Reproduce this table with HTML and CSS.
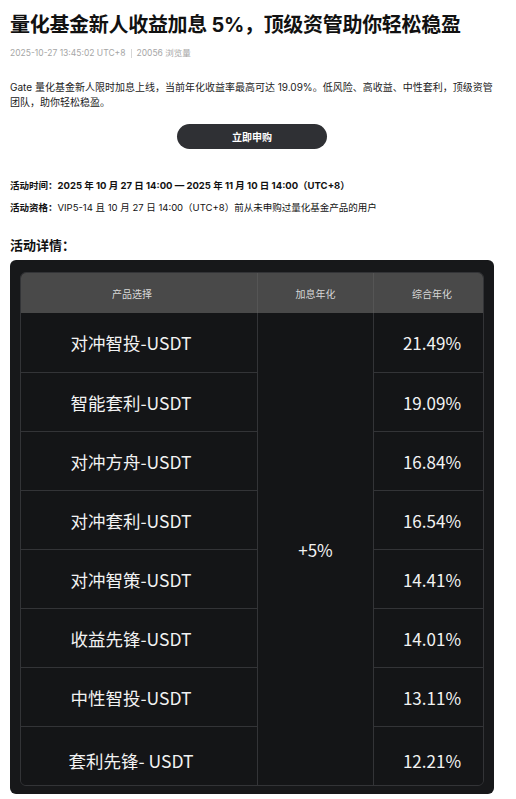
FILE: index.html
```html
<!DOCTYPE html>
<html lang="zh-CN">
<head>
<meta charset="utf-8">
<link rel="stylesheet" href="styles.css">
</head>
<body>
<div class="page">
  <h1 class="title">量化基金新人收益加息 5%，顶级资管助你轻松稳盈</h1>
  <div class="meta"><span>2025-10-27 13:45:02 UTC+8</span><span class="sep"></span><span>20056 浏览量</span></div>
  <p class="intro">Gate 量化基金新人限时加息上线，当前年化收益率最高可达 19.09%。低风险、高收益、中性套利，顶级资管团队，助你轻松稳盈。</p>
  <div class="cta-wrap"><a class="cta">立即申购</a></div>
  <p class="info bold"><b>活动时间：</b>2025 年 10 月 27 日 14:00 — 2025 年 11 月 10 日 14:00（UTC+8）</p>
  <p class="info"><b>活动资格：</b>VIP5-14 且 10 月 27 日 14:00（UTC+8）前从未申购过量化基金产品的用户</p>
  <h2 class="section">活动详情：</h2>
  <div class="card">
    <table class="grid">
      <thead>
        <tr><th class="c1">产品选择</th><th class="c2">加息年化</th><th class="c3">综合年化</th></tr>
      </thead>
      <tbody>
        <tr><td class="c1">对冲智投-USDT</td><td class="c2" rowspan="8">+5%</td><td class="c3">21.49%</td></tr>
        <tr><td class="c1">智能套利-USDT</td><td class="c3">19.09%</td></tr>
        <tr><td class="c1">对冲方舟-USDT</td><td class="c3">16.84%</td></tr>
        <tr><td class="c1">对冲套利-USDT</td><td class="c3">16.54%</td></tr>
        <tr><td class="c1">对冲智策-USDT</td><td class="c3">14.41%</td></tr>
        <tr><td class="c1">收益先锋-USDT</td><td class="c3">14.01%</td></tr>
        <tr><td class="c1">中性智投-USDT</td><td class="c3">13.11%</td></tr>
        <tr class="last"><td class="c1">套利先锋- USDT</td><td class="c3">12.21%</td></tr>
      </tbody>
    </table>
  </div>
</div>
</body>
</html>
```
FILE: styles.css
```css
* { box-sizing: border-box; }
html, body { margin: 0; padding: 0; background: #fff; }
body {
  font-family: Inter, "Noto Sans CJK SC", sans-serif;
  color: #111;
}
.page { padding: 12px 22px 0 10px; }
.title {
  margin: 0;
  font-size: 20px;
  line-height: 26px;
  font-weight: 700;
  color: #111;
  letter-spacing: -0.3px;
}
.meta {
  margin-top: 8px;
  font-size: 8.5px;
  line-height: 14px;
  color: #a6a6a6;
  display: flex;
  align-items: center;
}
.sep {
  display: inline-block;
  width: 1px;
  height: 9px;
  background: #d6d6d6;
  margin: 0 5px;
}
.intro {
  margin: 20px -6px 0 0;
  font-size: 10px;
  line-height: 15px;
  color: #222;
}
.cta-wrap { display: flex; justify-content: center; margin-top: 14px; }
.cta {
  width: 150px;
  height: 25px;
  border-radius: 13px;
  background: #2f3034;
  color: #fff;
  font-size: 10px;
  font-weight: 700;
  display: flex;
  align-items: center;
  justify-content: center;
}
.info {
  margin: 0;
  font-size: 9.5px;
  line-height: 14px;
  color: #111;
}
.info.bold { font-weight: 700; margin-top: 30px; }
.info + .info { margin-top: 8px; }
.info b { font-weight: 700; }
.section {
  margin: 21px 0 0;
  font-size: 13px;
  line-height: 18px;
  font-weight: 700;
}
.card {
  margin-top: 6px;
  background: #17181a;
  border-radius: 6px;
  padding: 12px 9px 8px 10px;
}
.grid {
  width: 464px;
  border-collapse: separate;
  border-spacing: 0;
  font-family: "Noto Sans CJK SC", sans-serif;
  border: 1px solid #333437;
  border-radius: 6px;
  overflow: hidden;
}
.grid th {
  height: 40px;
  background: #494949;
  color: #d8d8d8;
  font-size: 10px;
  font-weight: 400;
  padding: 0;
}
.grid td {
  height: 59px;
  color: #f2f2f2;
  font-size: 17px;
  text-align: center;
  padding: 0;
  background: #141517;
  border-top: 1px solid #333437;
}
.grid tbody tr:first-child td { border-top: none; }
.grid .c1 { width: 236px; padding-right: 14px; }
.grid td.c1 { font-size: 17.5px; padding-right: 16px; }
.grid tr.last td { padding-top: 8px; }
.grid .c2 { width: 117px; border-left: 1px solid #333437; border-right: 1px solid #333437; }
.grid td.c2 { padding-top: 0; }
.grid th.c2 { border-left: 1px solid #555; border-right: 1px solid #555; }
.grid .c3 { padding-left: 7px; }
```
